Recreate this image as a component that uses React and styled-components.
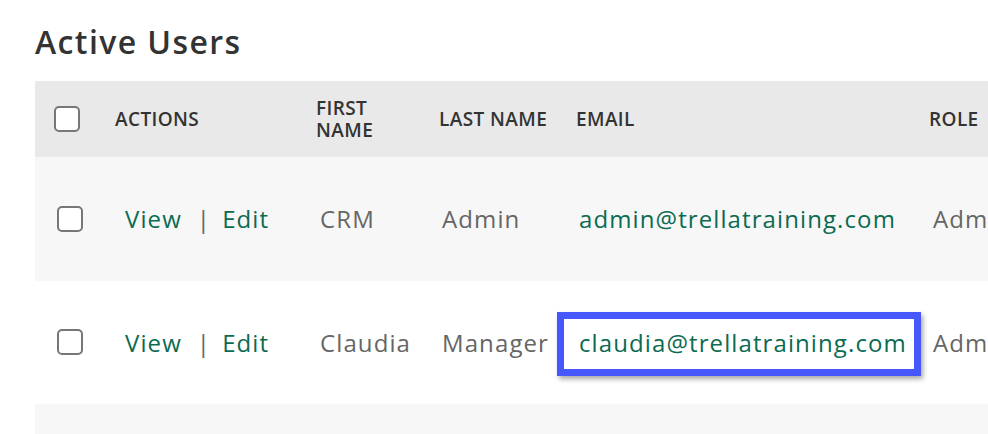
import React from 'react'
import styled, { createGlobalStyle } from 'styled-components';

const users = [
  { first: 'CRM', last: 'Admin', email: 'admin@trellatraining.com', role: 'Admin' },
  { first: 'Claudia', last: 'Manager', email: 'claudia@trellatraining.com', role: 'Admin', marked: true },
  { first: '', last: '', email: '', role: '', empty: true },
];

export default function App() {
  return (
    <>
      <GlobalStyle />
      <Page>
        <Title>Active Users</Title>
        <Table>
          <colgroup>
            <col style={{ width: 68 }} />
            <col style={{ width: 201 }} />
            <col style={{ width: 123 }} />
            <col style={{ width: 137 }} />
            <col style={{ width: 353 }} />
            <col style={{ width: 200 }} />
          </colgroup>
          <thead>
            <HeadRow>
              <HeadCell $pad={19}><Checkbox /></HeadCell>
              <HeadCell>Actions</HeadCell>
              <HeadCell>First Name</HeadCell>
              <HeadCell>Last Name</HeadCell>
              <HeadCell>Email</HeadCell>
              <HeadCell>Role</HeadCell>
            </HeadRow>
          </thead>
          <tbody>
            {users.map((u, i) => (
              <Row key={i} $shade={i % 2 === 0}>
                {u.empty ? (
                  <Cell colSpan={6} />
                ) : (
                  <>
                    <Cell $pad={22}><Checkbox /></Cell>
                    <Cell $pad={22}>
                      <Link>View</Link>
                      <Sep>|</Sep>
                      <Link>Edit</Link>
                    </Cell>
                    <Cell $pad={16}>{u.first}</Cell>
                    <Cell $pad={15}>{u.last}</Cell>
                    <Cell $pad={15}>
                      {u.marked ? <Marked>{u.email}</Marked> : <Link>{u.email}</Link>}
                    </Cell>
                    <Cell $pad={16}>{u.role}</Cell>
                  </>
                )}
              </Row>
            ))}
          </tbody>
        </Table>
      </Page>
    </>
  )
}

const GlobalStyle = createGlobalStyle`
  body {
    margin: 0;
    background: #fff;
    font-family: "Open Sans", "Noto Sans", sans-serif;
    overflow: hidden;
  }
`;

const Page = styled.div`
  padding: 22px 0 0 35px;
  width: 1200px;
`;

const Title = styled.h1`
  margin: 0 0 19px;
  font-size: 32px;
  line-height: 40px;
  font-weight: 600;
  letter-spacing: 1.4px;
  color: #333;
`;

const Table = styled.table`
  border-collapse: collapse;
  table-layout: fixed;
  width: 1082px;
`;

const HeadRow = styled.tr`
  background: #e9e9e9;
  height: 76px;
`;

const HeadCell = styled.th`
  padding: 0 12px 0 ${p => p.$pad ?? 12}px;
  text-align: left;
  vertical-align: middle;
  font-size: 19px;
  line-height: 22px;
  font-weight: 600;
  letter-spacing: 0.4px;
  color: #333;
  text-transform: uppercase;
`;

const Row = styled.tr`
  background: ${p => (p.$shade ? '#f7f7f7' : '#fff')};
  height: 123.5px;
`;

const Cell = styled.td`
  padding: 0 12px 0 ${p => p.$pad ?? 12}px;
  vertical-align: middle;
  font-size: 24px;
  letter-spacing: 1.1px;
  color: #666;
  white-space: nowrap;
  overflow: visible;
`;

const Checkbox = styled.span`
  display: block;
  width: 26px;
  height: 26px;
  box-sizing: border-box;
  border: 2.5px solid #777;
  border-radius: 5px;
  background: #fff;
`;

const Link = styled.span`
  color: #0b6b52;
`;

const Sep = styled.span`
  color: #666;
  margin: 0 11px 0 15px;
`;

const Marked = styled.span`
  position: relative;
  color: #0b6b52;

  &::after {
    content: '';
    position: absolute;
    top: -14px;
    bottom: -17px;
    left: -22px;
    right: -14px;
    border: 7px solid #4657fc;
    box-shadow: 2px 3px 5px rgba(0, 0, 0, 0.35);
  }
`;
